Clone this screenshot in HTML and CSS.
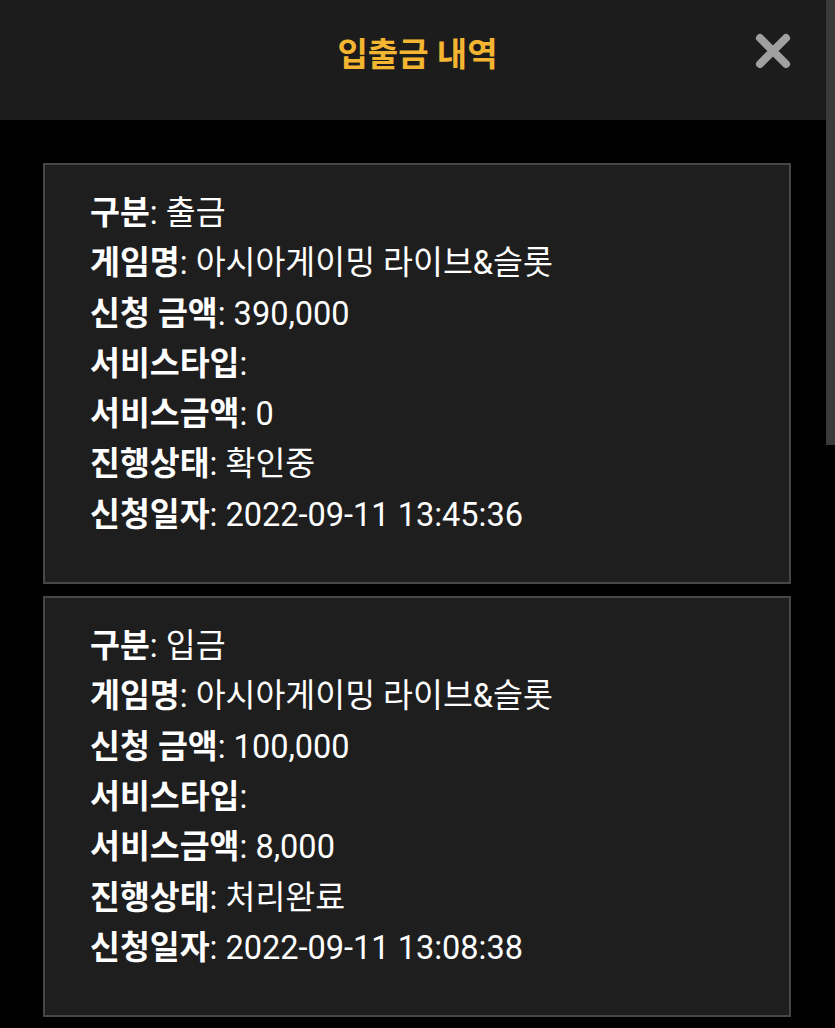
FILE: index.html
```html
<!DOCTYPE html>
<html lang="ko">
<head>
<meta charset="utf-8">
<title>입출금 내역</title>
<link rel="stylesheet" href="styles.css">
</head>
<body>
<div class="header">
  <h1 class="title">입출금 내역</h1>
  <button class="close" aria-label="닫기">
    <svg width="40" height="40" viewBox="0 0 40 40"><path d="M7 7 L33 33 M33 7 L7 33" stroke="#a0a0a0" stroke-width="8" stroke-linecap="round"/></svg>
  </button>
</div>
<div class="list">
  <div class="card">
    <div class="row"><b>구분</b>: 출금</div>
    <div class="row"><b>게임명</b>: 아시아게이밍 라이브&amp;슬롯</div>
    <div class="row"><b>신청 금액</b>: 390,000</div>
    <div class="row"><b>서비스타입</b>:</div>
    <div class="row"><b>서비스금액</b>: 0</div>
    <div class="row"><b>진행상태</b>: 확인중</div>
    <div class="row"><b>신청일자</b>: 2022-09-11 13:45:36</div>
  </div>
  <div class="card">
    <div class="row"><b>구분</b>: 입금</div>
    <div class="row"><b>게임명</b>: 아시아게이밍 라이브&amp;슬롯</div>
    <div class="row"><b>신청 금액</b>: 100,000</div>
    <div class="row"><b>서비스타입</b>:</div>
    <div class="row"><b>서비스금액</b>: 8,000</div>
    <div class="row"><b>진행상태</b>: 처리완료</div>
    <div class="row"><b>신청일자</b>: 2022-09-11 13:08:38</div>
  </div>
</div>
<div class="scrollbar"></div>
</body>
</html>
```
FILE: styles.css
```css
html, body {
  margin: 0;
  padding: 0;
  background: #000;
  font-family: Roboto, "Noto Sans CJK KR", sans-serif;
  color: #fff;
  overflow: hidden;
}
.header {
  height: 120px;
  background: #1c1c1c;
  display: flex;
  align-items: center;
  justify-content: center;
  position: relative;
}
.title {
  margin: 0;
  font-size: 33px;
  font-weight: 700;
  color: #f4b630;
  line-height: 1;
  padding-bottom: 12px;
}
.close {
  position: absolute;
  right: 42px;
  top: 31px;
  background: none;
  border: 0;
  padding: 0;
  width: 40px;
  height: 40px;
}
.close svg { display: block; }
.list {
  padding: 43px 44px 0 43px;
  display: flex;
  flex-direction: column;
  gap: 12px;
}
.card {
  background: #1e1e1e;
  border: 2px solid #474747;
  padding: 23px 20px 42px 45px;
}
.row {
  font-size: 32.5px;
  line-height: 50.3px;
  white-space: nowrap;
}
.row b { font-weight: 700; }
.scrollbar {
  position: absolute;
  right: 0;
  top: 0;
  width: 9px;
  height: 445px;
  background: #3a3a3a;
}
```
